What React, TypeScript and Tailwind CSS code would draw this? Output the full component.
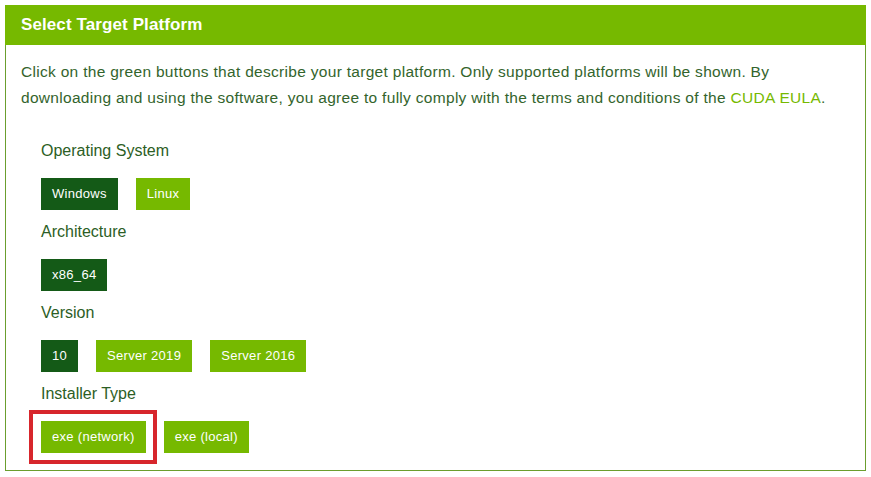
import React from 'react';

type Option = { label: string; active?: boolean; highlight?: boolean };

const groups: { title: string; options: Option[] }[] = [
  { title: 'Operating System', options: [{ label: 'Windows', active: true }, { label: 'Linux' }] },
  { title: 'Architecture', options: [{ label: 'x86_64', active: true }] },
  { title: 'Version', options: [{ label: '10', active: true }, { label: 'Server 2019' }, { label: 'Server 2016' }] },
  { title: 'Installer Type', options: [{ label: 'exe (network)', highlight: true }, { label: 'exe (local)' }] },
];

const OptionButton = ({ label, active, highlight }: Option) => (
  <div className="relative">
    <button
      className={`h-8 px-[11px] text-[13px] leading-8 tracking-[0.3px] text-white ${active ? 'bg-[#145a17]' : 'bg-[#76b900]'}`}
    >
      {label}
    </button>
    {highlight && (
      <span className="pointer-events-none absolute -left-3 -right-[11px] -top-[11px] -bottom-[11px] border-4 border-[#d7262c]" />
    )}
  </div>
);

const App = () => {
  return (
    <div className="min-h-screen bg-white p-[5px]" style={{ fontFamily: '"Liberation Sans", Arial, sans-serif' }}>
      <section className="border border-t-0 border-[#6b9e2e]">
        {/* Header */}
        <div className="h-10 -mx-px bg-[#76b900] px-4 flex items-center">
          <h2 className="text-[17px] font-bold tracking-[0.1px] text-white">Select Target Platform</h2>
        </div>

        <div className="px-[15px] pt-[14px] pb-[17px]">
          <p className="text-[15.5px] leading-[26px] tracking-[0.3px] text-[#33642c]">
            Click on the green buttons that describe your target platform. Only supported platforms will be shown. By
            downloading and using the software, you agree to fully comply with the terms and conditions of the{' '}
            <a href="#" className="text-[#76b900]">CUDA EULA</a>.
          </p>

          <div className="mt-[30px] pl-5">
            {groups.map((g, i) => (
              <div key={g.title} className={i > 0 ? 'mt-3' : ''}>
                <h3 className="text-[16px] leading-5 text-[#2c5e25]">{g.title}</h3>
                <div className="mt-[17px] flex gap-[18px]">
                  {g.options.map((o) => (
                    <OptionButton key={o.label} {...o} />
                  ))}
                </div>
              </div>
            ))}
          </div>
        </div>
      </section>
    </div>
  );
};

export default App;
